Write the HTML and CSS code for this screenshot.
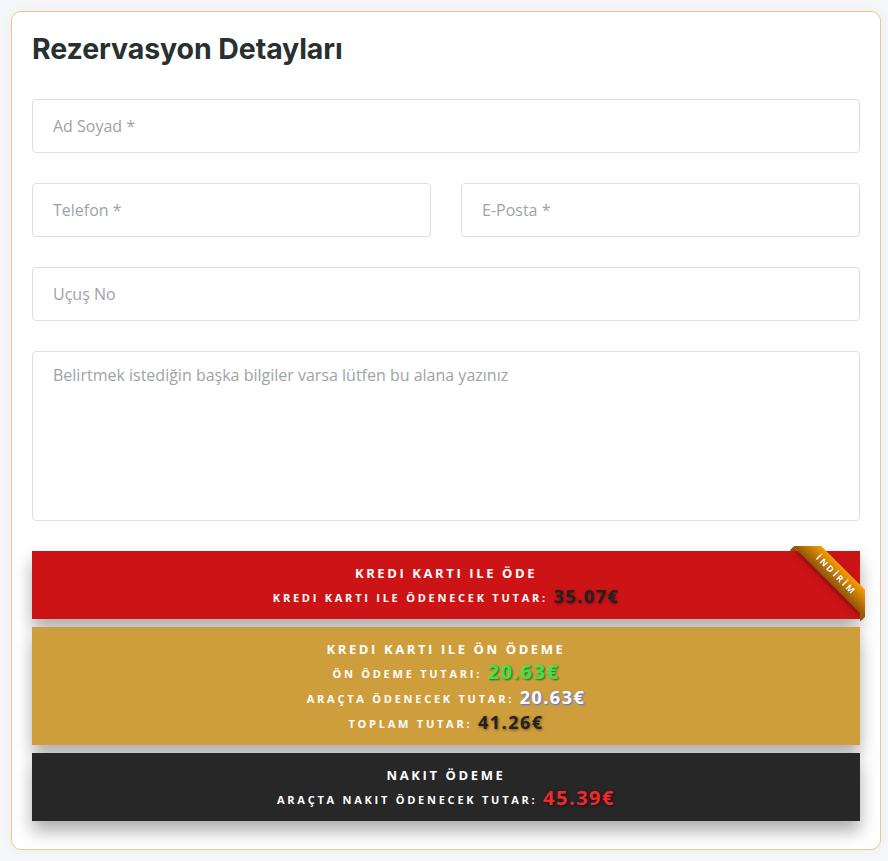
FILE: index.html
```
<!DOCTYPE html>
<html lang="tr">
<head>
<meta charset="utf-8">
<title>Rezervasyon Detayları</title>
<link rel="stylesheet" href="styles.css">
</head>
<body>
<div class="card">
  <h2 class="title">Rezervasyon Detayları</h2>
  <form class="form">
    <input class="field" type="text" placeholder="Ad Soyad *">
    <div class="row">
      <input class="field" type="text" placeholder="Telefon *">
      <input class="field" type="text" placeholder="E-Posta *">
    </div>
    <input class="field" type="text" placeholder="Uçuş No">
    <textarea class="field area" placeholder="Belirtmek istediğin başka bilgiler varsa lütfen bu alana yazınız"></textarea>
    <div class="payments">
      <div class="pay pay-red">
        <div class="ribbon"><span>İndirim</span></div>
        <div class="pay-title">KREDI KARTI ILE ÖDE</div>
        <div class="pay-row">KREDI KARTI ILE ÖDENECEK TUTAR: <span class="amt amt-dark amt-sm">35.07€</span></div>
      </div>
      <div class="pay pay-gold">
        <div class="pay-title">KREDI KARTI ILE ÖN ÖDEME</div>
        <div class="pay-row">ÖN ÖDEME TUTARI: <span class="amt amt-green">20.63€</span></div>
        <div class="pay-row">ARAÇTA ÖDENECEK TUTAR: <span class="amt amt-white amt-sm">20.63€</span></div>
        <div class="pay-row">TOPLAM TUTAR: <span class="amt amt-dark amt-sm">41.26€</span></div>
      </div>
      <div class="pay pay-black">
        <div class="pay-title">NAKIT ÖDEME</div>
        <div class="pay-row">ARAÇTA NAKIT ÖDENECEK TUTAR: <span class="amt amt-red">45.39€</span></div>
      </div>
    </div>
  </form>
</div>
</body>
</html>
```
FILE: styles.css
```
* { box-sizing: border-box; }
html, body { margin: 0; padding: 0; }
body {
  background: #f5f6f9;
  font-family: "Open Sans", "DejaVu Sans", sans-serif;
  padding: 11px 8px 9px 11px;
}
.card {
  background: #fff;
  border: 1px solid #e6ca8c;
  border-radius: 10px;
  padding: 20px 20px 20px 20px;
  box-shadow: 0 0 12px rgba(0, 0, 0, 0.04);
  width: 870px;
}
.title {
  margin: 0 0 33px 0;
  font-family: Inter, "Liberation Sans", sans-serif;
  font-weight: 700;
  font-size: 28.5px;
  line-height: 34px;
  letter-spacing: -0.1px;
  color: #283030;
}
.form {
  display: flex;
  flex-direction: column;
  gap: 30px;
}
.row {
  display: grid;
  grid-template-columns: 1fr 1fr;
  gap: 30px;
}
.field {
  display: block;
  width: 100%;
  height: 54px;
  border: 1px solid #dcdfe3;
  border-radius: 4px;
  padding: 0 20px;
  font-family: "Open Sans", sans-serif;
  font-size: 16px;
  color: #333;
  background: #fff;
  outline: none;
}
.field::placeholder { color: #9ea3a8; }
.area {
  height: 170px;
  padding: 11px 20px;
  line-height: 24px;
  resize: none;
}
.payments {
  display: flex;
  flex-direction: column;
  gap: 8px;
  margin-bottom: 8px;
}
.pay {
  position: relative;
  padding: 11px 10px 9px;
  text-align: center;
  color: #fff;
  font-weight: 700;
  box-shadow: 0 10px 16px rgba(0, 0, 0, 0.32);
}
.pay-red { background: #cc1417; }
.pay-gold { background: #cf9e3c; }
.pay-black { background: #272727; }
.pay-title {
  font-size: 13px;
  line-height: 23px;
  height: 23px;
  letter-spacing: 0.2em;
}
.pay-row {
  font-size: 11px;
  line-height: 25px;
  height: 25px;
  letter-spacing: 0.25em;
}
.amt {
  font-size: 20px;
  line-height: 0;
  letter-spacing: 1.5px;
  vertical-align: -1px;
}
.amt-sm { font-size: 18px; }
.amt-dark { color: #222; text-shadow: 1px 1px 3px rgba(0, 0, 0, 0.5); }
.amt-green { color: #3de24f; text-shadow: 1px 1px 2px rgba(0, 90, 0, 0.8); }
.amt-white { color: #fff; text-shadow: 1px 1px 2px #4a6cf0; }
.amt-red { color: #f5282a; text-shadow: 1px 1px 3px rgba(0, 0, 0, 0.6); }

.ribbon {
  position: absolute;
  right: -5px;
  top: -5px;
  z-index: 1;
  overflow: hidden;
  width: 75px;
  height: 75px;
}
.ribbon span {
  position: absolute;
  top: 19px;
  right: -21px;
  display: block;
  width: 100px;
  font-size: 9px;
  font-weight: 700;
  line-height: 20px;
  letter-spacing: 2.2px;
  text-transform: uppercase;
  text-align: center;
  color: #fff;
  background: linear-gradient(#f79e05 0%, #8f5408 100%);
  transform: rotate(45deg);
  box-shadow: 0 3px 10px -5px rgba(0, 0, 0, 1);
  text-shadow: 0 1px 1px rgba(0, 0, 0, 0.3);
}
.ribbon span::before {
  content: "";
  position: absolute;
  left: 0;
  top: 100%;
  z-index: -1;
  border-left: 3px solid #8f5408;
  border-right: 3px solid transparent;
  border-bottom: 3px solid transparent;
  border-top: 3px solid #8f5408;
}
.ribbon span::after {
  content: "";
  position: absolute;
  right: 0;
  top: 100%;
  z-index: -1;
  border-left: 3px solid transparent;
  border-right: 3px solid #8f5408;
  border-bottom: 3px solid transparent;
  border-top: 3px solid #8f5408;
}
```
